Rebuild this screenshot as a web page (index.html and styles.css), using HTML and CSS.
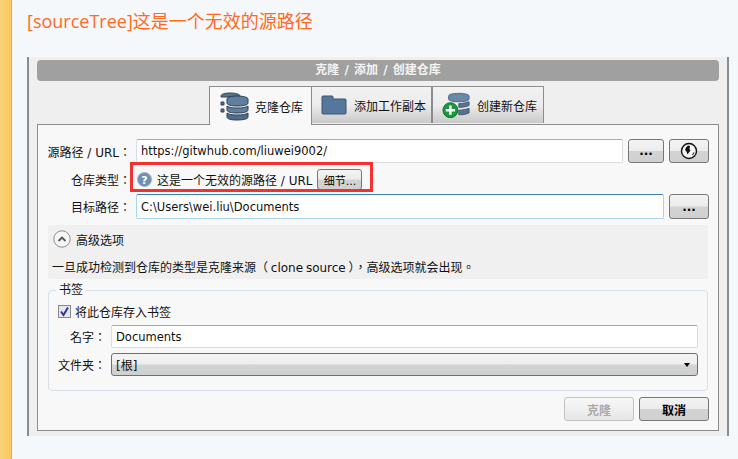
FILE: index.html
```html
<!DOCTYPE html>
<html lang="en">
<head>
    <meta charset="UTF-8">
    <title>[sourceTree]这是一个无效的源路径</title>
    <link rel="stylesheet" href="styles.css">
</head>
<body>

<div class="stripe"></div>

<div class="content">
    <h1 class="post-title">[sourceTree]这是一个无效的源路径</h1>

    <div class="window">
        <div class="title-bar">克隆 / 添加 / 创建仓库</div>

        <div class="tabs">
            <div class="tab active">
                <svg class="tab-icon" width="29" height="29" viewBox="0 0 29 29">
                    <path d="M1 4c0-2 4-3 9-3s10 1 10 3v1H1z" fill="#55728f" stroke="#33475c"/>
                    <path d="M1 10h3v3H1zM1 17h3v3H1z" fill="#55728f" stroke="#33475c"/>
                    <path d="M7 7c0-2 5-3 10-3s11 1 11 3v4c0 2-5 3-11 3S7 13 7 11z" fill="#5f7f9f" stroke="#2c3e52"/>
                    <path d="M7 14c2 1.500 5 2 10 2s9-.5 11-2v4c0 2-5 3-11 3s-10-1-10-3z" fill="#5f7f9f" stroke="#2c3e52"/>
                    <path d="M7 21c2 1.500 5 2 10 2s9-.5 11-2v4c0 2-5 3-11 3s-10-1-10-3z" fill="#4f6d8b" stroke="#2c3e52"/>
                </svg>
                <span>克隆仓库</span>
            </div>
            <div class="tab">
                <svg class="tab-icon" width="26" height="20" viewBox="0 0 26 20">
                    <path d="M1 2c0-.6.4-1 1-1h9c.6 0 1 .4 1 1v2h12c.6 0 1 .4 1 1v13c0 .6-.4 1-1 1H2c-.6 0-1-.4-1-1z" fill="#55779c" stroke="#3b5573"/>
                </svg>
                <span>添加工作副本</span>
            </div>
            <div class="tab">
                <svg class="tab-icon" width="28" height="27" viewBox="0 0 30 28">
                    <path d="M7 4c0-2 5-3 11-3s11 1 11 3v3c0 2-5 3-11 3S7 9 7 7z" fill="#6a88a8" stroke="#4a6685"/>
                    <path d="M18 12c4 0 8-1 11-2v4c-2 1-6 2-11 2z" fill="#55728f" stroke="#3f5a78"/>
                    <path d="M18 19c4 0 8-1 11-2v5c-2 1-6 2-11 2z" fill="#55728f" stroke="#3f5a78"/>
                    <circle cx="9" cy="19" r="8" fill="#179a3c" stroke="#0d6b28"/>
                    <path d="M9 14v10M4 19h10" stroke="#fff" stroke-width="2.600"/>
                </svg>
                <span>创建新仓库</span>
            </div>
        </div>

        <div class="panel">
            <div class="form-row row-source">
                <label class="row-label">源路径 / URL：</label>
                <input class="text-input" type="text" value="https://gitwhub.com/liuwei9002/">
                <button class="btn btn-dots">...</button>
                <button class="btn btn-globe">
                    <svg width="18" height="18" viewBox="0 0 18 18">
                        <circle cx="9" cy="9" r="7.500" fill="#f4f4f4" stroke="#111" stroke-width="1.400"/>
                        <path d="M8 3.500 10 4 9.500 7 10.500 8.500 8.500 11 7.500 12.500 6.500 9.500 5 8 6 5.500zM13 11l1.500-1-1 2.500-1.500 1z" fill="#111"/>
                    </svg>
                </button>
            </div>

            <div class="form-row row-type">
                <label class="row-label">仓库类型：</label>
                <svg class="help-icon" width="15" height="15" viewBox="0 0 15 15">
                    <circle cx="7.500" cy="7.500" r="7" fill="#6f8fb3" stroke="#9fb2c8"/>
                    <text x="7.500" y="11.500" class="help-mark">?</text>
                </svg>
                <span class="type-text">这是一个无效的源路径 / URL</span>
                <button class="btn btn-detail">细节...</button>
                <div class="red-box"></div>
            </div>

            <div class="form-row row-target">
                <label class="row-label">目标路径：</label>
                <input class="text-input focused" type="text" value="C:\Users\wei.liu\Documents">
                <button class="btn btn-globe btn-more">...</button>
            </div>

            <div class="advanced">
                <div class="advanced-head">
                    <svg width="18" height="18" viewBox="0 0 18 18">
                        <circle cx="9" cy="9" r="8.200" fill="#f6f6f6" stroke="#8e8e8e"/>
                        <path d="M5.500 11 9 7.500l3.500 3.500" fill="none" stroke="#555" stroke-width="1.800"/>
                    </svg>
                    <span>高级选项</span>
                </div>
                <p class="advanced-note">一旦成功检测到仓库的类型是克隆来源（ clone source ），高级选项就会出现。</p>
            </div>

            <fieldset class="bookmark">
                <legend>书签</legend>
                <div class="check-row">
                    <span class="check-box">
                        <svg width="11" height="11" viewBox="0 0 11 11">
                            <path d="M2 5.500 4.500 9 9 1.500" fill="none" stroke="#2f3590" stroke-width="2"/>
                        </svg>
                    </span>
                    <span>将此仓库存入书签</span>
                </div>
                <div class="field-row">
                    <label>名字：</label>
                    <input class="text-input" type="text" value="Documents">
                </div>
                <div class="field-row">
                    <label>文件夹：</label>
                    <div class="select-box">
                        <span>[根]</span>
                        <span class="select-arrow"></span>
                    </div>
                </div>
            </fieldset>

            <div class="actions">
                <button class="btn btn-action" disabled>克隆</button>
                <button class="btn btn-action btn-primary">取消</button>
            </div>
        </div>
    </div>
</div>

</body>
</html>
```

FILE: styles.css
```css
html, body {
    height: 100%;
}
body {
    margin: 0;
    display: flex;
    height: 459px;
    overflow: hidden;
    background-color: #f5f8fb;
    font-family: "DejaVu Sans", "Noto Sans CJK SC", sans-serif;
    font-size: 12px;
    color: #111;
}
.stripe {
    width: 11px;
    flex-shrink: 0;
    background: linear-gradient(to right, #fad27a, #f8c95e);
    border-right: 1px solid #e3ae4c;
}
.content {
    flex: 1;
    padding-left: 15px;
}
.post-title {
    margin: 9px 0 0;
    height: 48px;
    box-sizing: border-box;
    font-family: "Open Sans", "Noto Sans CJK SC", sans-serif;
    font-size: 18px;
    line-height: 24px;
    font-weight: normal;
    color: #ff6a1f;
}

.window {
    width: 702px;
    height: 379px;
    box-sizing: border-box;
    padding: 3px 8px 0;
    background-color: #efefef;
    border-left: 2px solid #8c8c8c;
    border-right: 2px solid #8c8c8c;
}
.title-bar {
    height: 21px;
    line-height: 21px;
    background-color: #a0a0a0;
    border-radius: 4px;
    color: #f4f4f4;
    font-size: 12px;
    font-weight: bold;
    word-spacing: 1px;
    text-align: center;
}

.tabs {
    display: flex;
    align-items: flex-end;
    height: 43px;
    padding-left: 172px;
    position: relative;
    z-index: 1;
}
.tab {
    display: flex;
    align-items: center;
    box-sizing: border-box;
    height: 37px;
    padding-left: 9px;
    margin-bottom: 1px;
    gap: 7px;
    background: linear-gradient(to bottom, #f2f2f2 0%, #ececec 50%, #c9c9c9 100%);
    border: 1px solid #8c8c8c;
    border-bottom: none;
    border-left-width: 0;
}
.tab:nth-child(2) {
    width: 121px;
    border-right-width: 2px;
}
.tab:nth-child(3) {
    width: 111px;
}
.tab.active {
    width: 103px;
    height: 39px;
    margin-bottom: -1px;
    padding-left: 10px;
    gap: 6px;
    background: #f8f8f8;
    border-left-width: 1px;
}
.tab-icon {
    flex-shrink: 0;
}

.panel {
    height: 307px;
    box-sizing: border-box;
    padding: 14px 9px 0 10px;
    background-color: #f8f8f8;
    border: 1px solid #8c8c8c;
}
.form-row {
    display: flex;
    align-items: center;
    gap: 5px;
}
.row-label {
    width: 85px;
    margin-left: -2px;
    font-family: "DejaVu Sans", "Noto Sans CJK TC", sans-serif;
    text-align: right;
    white-space: nowrap;
    flex-shrink: 0;
}
.row-source {
    height: 24px;
}
.row-type {
    height: 31px;
    box-sizing: border-box;
    padding-top: 2px;
    position: relative;
}
.row-target {
    height: 25px;
}
.text-input {
    flex: 1;
    min-width: 0;
    height: 100%;
    box-sizing: border-box;
    padding: 0 4px;
    background-color: #fff;
    border: 1px solid #d9dde2;
    border-top-color: #a8a8a8;
    border-radius: 2px;
    font: inherit;
    font-size: 11.500px;
    color: #111;
    outline: none;
}
.text-input.focused {
    border-color: #a9d3e8;
    border-top-color: #3f7fb2;
}
.btn {
    box-sizing: border-box;
    height: 24px;
    padding: 0;
    background: linear-gradient(to bottom, #f3f3f3 0%, #ececec 48%, #d3d3d3 52%, #d0d0d0 100%);
    border: 1px solid #777;
    border-radius: 3px;
    font: inherit;
    color: #000;
}
.btn-dots {
    width: 36px;
    font-weight: bold;
}
.btn-globe {
    width: 40px;
    display: flex;
    align-items: center;
    justify-content: center;
}
.btn-more {
    font-weight: bold;
    height: 25px;
}
.help-icon {
    margin-left: 1px;
    flex-shrink: 0;
}
.help-mark {
    fill: #fff;
    font-size: 11px;
    font-weight: bold;
    text-anchor: middle;
}
.btn-detail {
    width: 45px;
    height: 21px;
    font-size: 11px;
}
.red-box {
    position: absolute;
    left: 82px;
    top: -1px;
    width: 243px;
    height: 30px;
    box-sizing: border-box;
    border: 3px solid #f5302e;
}

.advanced {
    height: 54px;
    margin: 6px 1px 4px 0;
    padding: 5px 5px 0;
    box-sizing: border-box;
    background-color: #f0f0f0;
    border-radius: 3px;
}
.advanced-head {
    display: flex;
    align-items: center;
    gap: 5px;
    height: 18px;
}
.advanced-note {
    margin: 12px 0 0 -1px;
    font-family: "DejaVu Sans", "Noto Sans CJK TC", sans-serif;
    line-height: 16px;
    word-spacing: -1px;
    white-space: nowrap;
}

.bookmark {
    height: 108px;
    margin: 0 1px 0 0;
    padding: 0 9px;
    box-sizing: border-box;
    border: 1px solid #d8dfe8;
    border-radius: 4px;
}
.bookmark legend {
    margin-left: -2px;
    padding: 0 3px;
    line-height: 14px;
}
.check-row {
    display: flex;
    align-items: center;
    gap: 4px;
    height: 14px;
    margin-top: 7px;
}
.check-box {
    display: flex;
    align-items: center;
    justify-content: center;
    box-sizing: border-box;
    width: 13px;
    height: 13px;
    background-color: #e4e6f2;
    border: 1px solid #8a8a8a;
}
.field-row {
    display: flex;
    align-items: center;
    height: 23px;
    margin-top: 5px;
}
.check-row + .field-row {
    margin-top: 7px;
}
.field-row label {
    width: 48px;
    margin-right: 5px;
    flex-shrink: 0;
    font-family: "DejaVu Sans", "Noto Sans CJK TC", sans-serif;
    text-align: right;
    white-space: nowrap;
}
.select-box {
    flex: 1;
    display: flex;
    align-items: center;
    justify-content: space-between;
    height: 100%;
    box-sizing: border-box;
    padding: 0 7px 0 4px;
    background: linear-gradient(to bottom, #f3f4f3 0%, #eeeeee 45%, #d2d3d3 55%, #cfd0d0 100%);
    border: 1px solid #6f6f6f;
    border-radius: 3px;
}
.select-arrow {
    width: 0;
    height: 0;
    border-left: 3.500px solid transparent;
    border-right: 3.500px solid transparent;
    border-top: 4px solid #000;
}

.actions {
    display: flex;
    justify-content: flex-end;
    gap: 5px;
    margin-top: 6px;
}
.btn-action {
    width: 70px;
    font-size: 12px;
    font-weight: bold;
}
.btn-action[disabled] {
    color: #aaa;
    background: linear-gradient(to bottom, #f7f7f7, #f0f0f0 50%, #e6e6e6);
    border-color: #c2c2c2;
}
```
